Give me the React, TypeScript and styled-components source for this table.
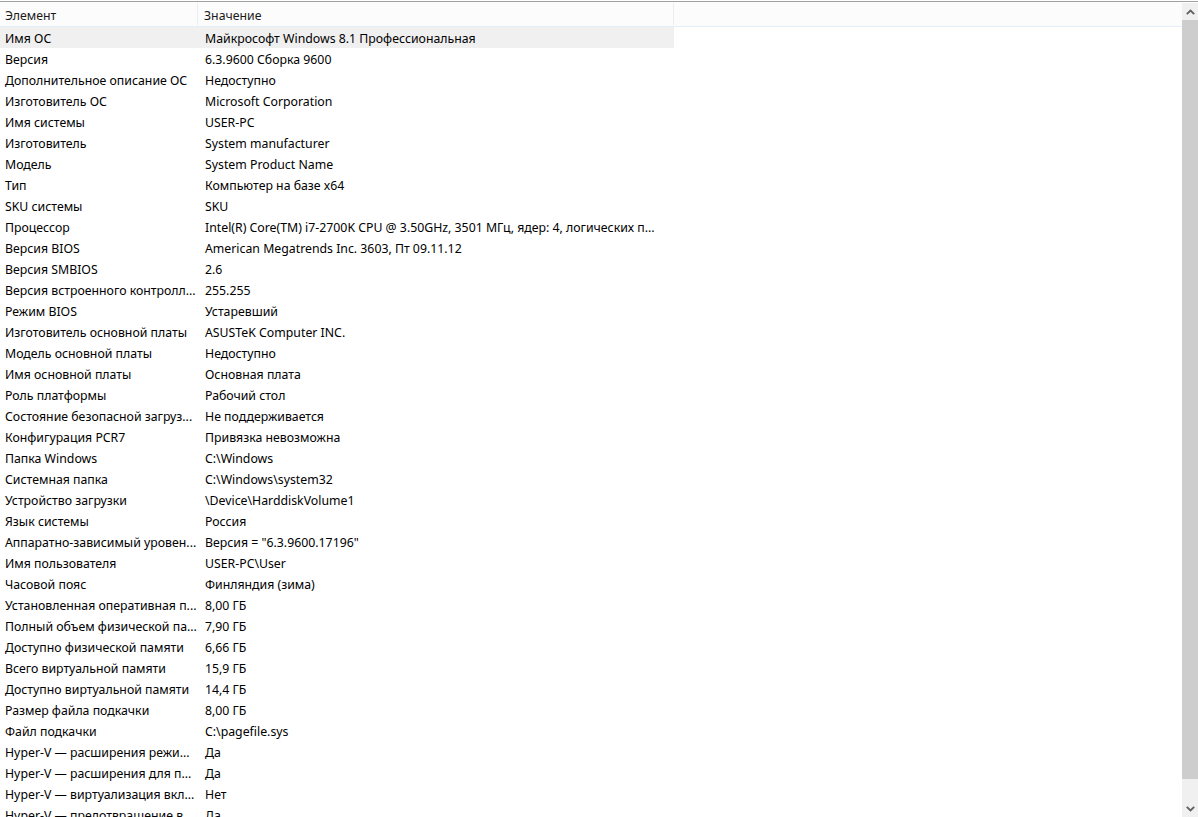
import React from "react";
import styled, { createGlobalStyle } from "styled-components";

const Global = createGlobalStyle`
  html, body { margin: 0; padding: 0; background: #ffffff; overflow: hidden; }
  body { font-family: "Noto Sans", "Segoe UI", sans-serif; }
`;

const Frame = styled.div`
  width: 1198px;
  height: 817px;
  padding-top: 1px;
  box-sizing: border-box;
  display: flex;
  flex-direction: column;
  overflow: hidden;
`;

const Body = styled.div`
  flex: 1;
  display: flex;
  border-top: 1px solid #a0a0a0;
  min-height: 0;
`;

const ListPane = styled.div`
  flex: 1;
  display: flex;
  flex-direction: column;
  min-width: 0;
`;

const Header = styled.div`
  display: flex;
  flex: none;
  height: 24px;
  box-sizing: content-box;
  background: #fcfcfc;
  border-bottom: 1px solid #e3eef9;
`;

const HeaderCell = styled.div<{ $w: number; $pad: number }>`
  width: ${(p) => p.$w}px;
  height: 22px;
  flex: none;
  box-sizing: border-box;
  padding-left: ${(p) => p.$pad}px;
  padding-top: 4px;
  margin-top: 1px;
  border-right: 1px solid #e8eef5;
  font-size: 12.3px;
  line-height: 18px;
  color: #1a1a1a;
  white-space: nowrap;
`;

const Row = styled.div<{ $selected?: boolean }>`
  display: flex;
  flex: none;
  height: 21px;
  width: 674px;
  background: ${(p) => (p.$selected ? "#f0f0f0" : "transparent")};
`;

const Cell = styled.div<{ $w: number; $pad: number }>`
  width: ${(p) => p.$w}px;
  height: 21px;
  flex: none;
  box-sizing: border-box;
  padding-left: ${(p) => p.$pad}px;
  padding-right: 1px;
  padding-top: 1px;
  font-size: 12.3px;
  line-height: 21px;
  color: #000000;
  white-space: nowrap;
  overflow: hidden;
  text-overflow: ellipsis;
`;

const ScrollBar = styled.div`
  width: 16px;
  flex: none;
  margin-top: 1px;
  display: flex;
  flex-direction: column;
  background: #f0f0f0;
`;

const ArrowButton = styled.div`
  height: 17px;
  flex: none;
  display: flex;
  align-items: center;
  justify-content: center;
  background: #f0f0f0;
`;

const Thumb = styled.div`
  height: 759px;
  flex: none;
  background: #cdcdcd;
`;

const Track = styled.div`
  flex: 1;
  background: #f0f0f0;
`;

const Chevron = ({ up }: { up?: boolean }) => (
  <svg width="9" height="6" viewBox="0 0 9 6">
    <path
      d={up ? "M0.8 5.2 L4.5 1.5 L8.2 5.2" : "M0.8 0.8 L4.5 4.5 L8.2 0.8"}
      fill="none"
      stroke="#606060"
      strokeWidth="1.8"
    />
  </svg>
);

const rows: [string, string][] = [
  ["Имя ОС", "Майкрософт Windows 8.1 Профессиональная"],
  ["Версия", "6.3.9600 Сборка 9600"],
  ["Дополнительное описание ОС", "Недоступно"],
  ["Изготовитель ОС", "Microsoft Corporation"],
  ["Имя системы", "USER-PC"],
  ["Изготовитель", "System manufacturer"],
  ["Модель", "System Product Name"],
  ["Тип", "Компьютер на базе x64"],
  ["SKU системы", "SKU"],
  ["Процессор", "Intel(R) Core(TM) i7-2700K CPU @ 3.50GHz, 3501 МГц, ядер: 4, логических п..."],
  ["Версия BIOS", "American Megatrends Inc. 3603, Пт 09.11.12"],
  ["Версия SMBIOS", "2.6"],
  ["Версия встроенного контролл...", "255.255"],
  ["Режим BIOS", "Устаревший"],
  ["Изготовитель основной платы", "ASUSTeK Computer INC."],
  ["Модель основной платы", "Недоступно"],
  ["Имя основной платы", "Основная плата"],
  ["Роль платформы", "Рабочий стол"],
  ["Состояние безопасной загруз...", "Не поддерживается"],
  ["Конфигурация PCR7", "Привязка невозможна"],
  ["Папка Windows", "C:\\Windows"],
  ["Системная папка", "C:\\Windows\\system32"],
  ["Устройство загрузки", "\\Device\\HarddiskVolume1"],
  ["Язык системы", "Россия"],
  ["Аппаратно-зависимый уровен...", "Версия = \"6.3.9600.17196\""],
  ["Имя пользователя", "USER-PC\\User"],
  ["Часовой пояс", "Финляндия (зима)"],
  ["Установленная оперативная п...", "8,00 ГБ"],
  ["Полный объем физической па...", "7,90 ГБ"],
  ["Доступно физической памяти", "6,66 ГБ"],
  ["Всего виртуальной памяти", "15,9 ГБ"],
  ["Доступно виртуальной памяти", "14,4 ГБ"],
  ["Размер файла подкачки", "8,00 ГБ"],
  ["Файл подкачки", "C:\\pagefile.sys"],
  ["Hyper-V — расширения режи...", "Да"],
  ["Hyper-V — расширения для п...", "Да"],
  ["Hyper-V — виртуализация вкл...", "Нет"],
  ["Hyper-V — предотвращение в...", "Да"],
];

export default function App() {
  return (
    <>
      <Global />
      <Frame>
        <Body>
          <ListPane>
            <Header>
              <HeaderCell $w={198} $pad={5}>Элемент</HeaderCell>
              <HeaderCell $w={476} $pad={6}>Значение</HeaderCell>
            </Header>
            {rows.map(([k, v], i) => (
              <Row key={i} $selected={i === 0}>
                <Cell $w={198} $pad={5}>{k}</Cell>
                <Cell $w={476} $pad={7}>{v}</Cell>
              </Row>
            ))}
          </ListPane>
          <ScrollBar>
            <ArrowButton>
              <Chevron up />
            </ArrowButton>
            <Thumb />
            <Track />
            <ArrowButton>
              <Chevron />
            </ArrowButton>
          </ScrollBar>
        </Body>
      </Frame>
    </>
  );
}
